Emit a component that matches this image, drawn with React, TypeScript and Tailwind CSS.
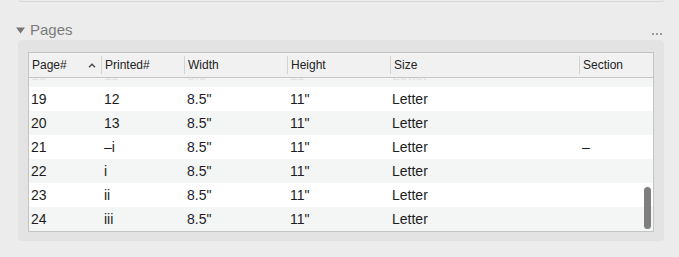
const columns = ["Page#", "Printed#", "Width", "Height", "Size", "Section"];

const rows = [
  { page: "18", printed: "11", width: '8.5"', height: '11"', size: "Letter", section: "" },
  { page: "19", printed: "12", width: '8.5"', height: '11"', size: "Letter", section: "" },
  { page: "20", printed: "13", width: '8.5"', height: '11"', size: "Letter", section: "" },
  { page: "21", printed: "–i", width: '8.5"', height: '11"', size: "Letter", section: "–" },
  { page: "22", printed: "i", width: '8.5"', height: '11"', size: "Letter", section: "" },
  { page: "23", printed: "ii", width: '8.5"', height: '11"', size: "Letter", section: "" },
  { page: "24", printed: "iii", width: '8.5"', height: '11"', size: "Letter", section: "" },
];

const grid = "grid grid-cols-[72px_83px_103px_103px_189px_1fr]";

function SortCaret() {
  return (
    <svg width="8" height="5" viewBox="0 0 8 5" className="mr-[5px]">
      <polyline points="1,4.2 4,1.2 7,4.2" fill="none" stroke="#444" strokeWidth="1.3" />
    </svg>
  );
}

export default function App() {
  return (
    <div
      className="w-[679px] h-[257px] bg-[#ececec] overflow-hidden"
      style={{ fontFamily: '"Liberation Sans", Arial, sans-serif' }}
    >
      {/* bottom edge of the panel above */}
      <div className="ml-[19px] w-[645px] h-[2px] border-b border-x border-[#d8d8d8] rounded-b-[4px]" />

      <div className="flex items-start justify-between h-[38px] pt-[19px] pl-[16px] pr-[17px]">
        <div className="flex items-center gap-[5px]">
          <svg width="9" height="7" viewBox="0 0 9 7" className="mt-[1px]">
            <polygon points="0,0.5 9,0.5 4.5,6.5" fill="#777" />
          </svg>
          <span className="text-[15px] leading-[18px] text-[#7b7b7b]">Pages</span>
        </div>
        <div className="flex gap-[2px] pt-[12px]">
          <div className="w-[2px] h-[1.5px] bg-[#999]" />
          <div className="w-[2px] h-[1.5px] bg-[#999]" />
          <div className="w-[2px] h-[1.5px] bg-[#999]" />
        </div>
      </div>

      <div className="ml-[18px] w-[646px] h-[201px] bg-[#e3e3e3] rounded-[4px] pt-[12px] px-[10px]">
        <div className="border border-[#c4c4c4] bg-white">
          <div className={`${grid} h-[25px] bg-[#f1f1f1] border-b border-[#c6c6c6] text-[12px] text-[#222]`}>
            {columns.map((c, i) => (
              <div
                key={c}
                className={`flex items-center my-[3px] pl-[3px] ${i > 0 ? "border-l border-[#d2d2d2]" : "pl-[2px] justify-between"}`}
              >
                <span>{c}</span>
                {i === 0 && <SortCaret />}
              </div>
            ))}
          </div>

          <div className="relative h-[153px] overflow-hidden">
            <div className="mt-[-15px]">
              {rows.map((r, i) => (
                <div
                  key={r.page}
                  className={`${grid} h-[24px] items-center text-[14px] ${i === 0 ? "text-[#e2e2e2]" : "text-[#1d1d1d]"} ${i % 2 === 0 ? "bg-[#f4f5f5]" : "bg-white"}`}
                >
                  <div className="pl-[2px]">{r.page}</div>
                  <div className="pl-[3px]">{r.printed}</div>
                  <div className="pl-[3px]">{r.width}</div>
                  <div className="pl-[3px]">{r.height}</div>
                  <div className="pl-[2px]">{r.size}</div>
                  <div className="pl-[3px]">{r.section}</div>
                </div>
              ))}
            </div>
            <div className="absolute right-[2px] top-[109px] w-[7px] h-[42px] rounded-full bg-[#7e7e7e]" />
          </div>
        </div>
      </div>
    </div>
  );
}
